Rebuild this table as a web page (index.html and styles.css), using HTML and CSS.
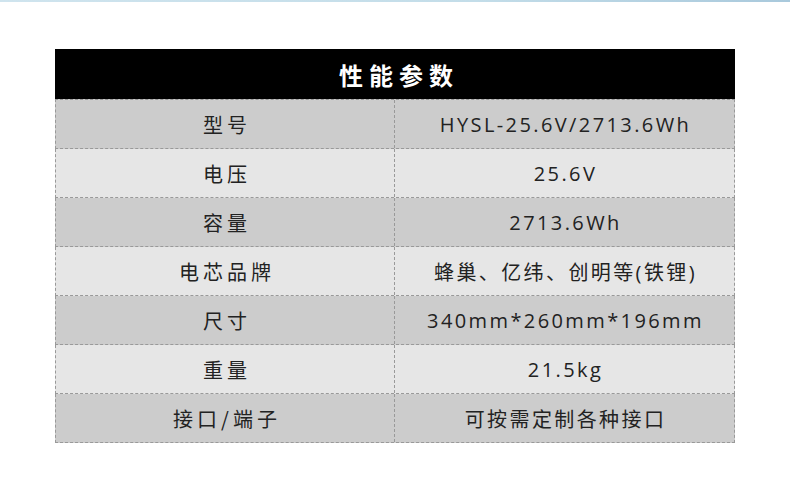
FILE: index.html
```html
<!DOCTYPE html>
<html lang="zh">
<head>
<meta charset="utf-8">
<link rel="stylesheet" href="styles.css">
</head>
<body>
<div class="topline"></div>
<div class="page">
  <div class="spec">
    <div class="spec-head">性能参数</div>
    <div class="row dark first"><div class="cell label">型号</div><div class="cell value">HYSL-25.6V/2713.6Wh</div></div>
    <div class="row light"><div class="cell label">电压</div><div class="cell value">25.6V</div></div>
    <div class="row dark"><div class="cell label">容量</div><div class="cell value">2713.6Wh</div></div>
    <div class="row light"><div class="cell label">电芯品牌</div><div class="cell value">蜂巢、亿纬、创明等(铁锂)</div></div>
    <div class="row dark"><div class="cell label">尺寸</div><div class="cell value">340mm*260mm*196mm</div></div>
    <div class="row light"><div class="cell label">重量</div><div class="cell value">21.5kg</div></div>
    <div class="row dark"><div class="cell label">接口/端子</div><div class="cell value">可按需定制各种接口</div></div>
  </div>
</div>
</body>
</html>
```
FILE: styles.css
```css
html, body {
  margin: 0;
  padding: 0;
  background: #ffffff;
}
body {
  width: 790px;
  height: 495px;
  overflow: hidden;
  font-family: "Open Sans", "Noto Sans CJK SC", sans-serif;
  color: #222;
}
.topline {
  height: 2px;
  background: linear-gradient(to right, #cfe4ee, #c3dde9 60%, #a9c9dc);
}
.page {
  padding: 47px 55px 0 55px;
}
.spec {
  width: 680px;
}
.spec-head {
  height: 50px;
  background: #000;
  color: #fff;
  font-family: "Noto Sans CJK SC", sans-serif;
  font-weight: 700;
  font-size: 24px;
  letter-spacing: 6px;
  display: flex;
  align-items: center;
  justify-content: center;
  padding-left: 8px;
  box-sizing: border-box;
}
.row {
  display: grid;
  grid-template-columns: 339px 1fr;
  height: 49px;
  border-bottom: 1px dashed #999;
  box-sizing: border-box;
  border-left: 1px dashed #999;
  border-right: 1px dashed #999;
}
.row.first {
  height: 50px;
  border-top: 1px dashed #999;
}
.row.dark { background: #cccccc; }
.row.light { background: #e6e6e6; }
.cell {
  display: flex;
  align-items: center;
  justify-content: center;
  font-size: 20px;
  color: #222;
}
.label {
  border-right: 1px dashed #999;
  font-family: "Noto Sans CJK SC", sans-serif;
  letter-spacing: 4px;
  padding-left: 4px;
}
.value {
  font-family: "Open Sans", "Noto Sans CJK SC", sans-serif;
  letter-spacing: 2.4px;
  padding-left: 2px;
}
```
